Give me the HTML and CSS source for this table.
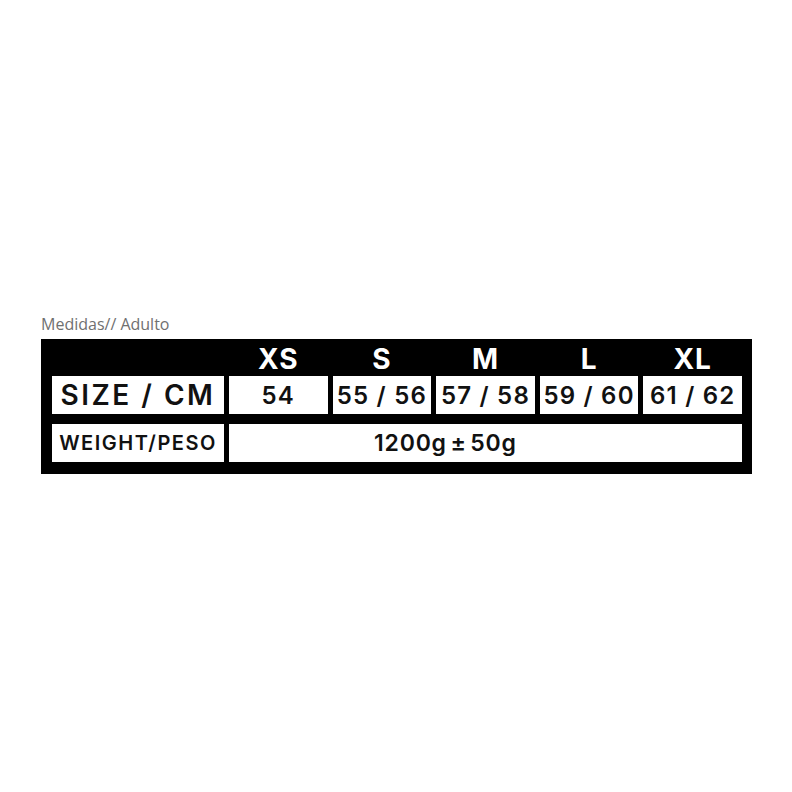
FILE: index.html
```html
<!DOCTYPE html>
<html lang="es">
<head>
<meta charset="utf-8">
<title>Medidas Adulto</title>
<link rel="stylesheet" href="styles.css">
</head>
<body>
<main class="page">
  <p class="caption">Medidas// Adulto</p>
  <div class="chart">
    <div class="head-blank"></div>
    <div class="head">XS</div>
    <div class="head">S</div>
    <div class="head">M</div>
    <div class="head">L</div>
    <div class="head">XL</div>

    <div class="cell label label-size">SIZE / CM</div>
    <div class="cell num">54</div>
    <div class="cell num">55 / 56</div>
    <div class="cell num">57 / 58</div>
    <div class="cell num">59 / 60</div>
    <div class="cell num">61 / 62</div>

    <div class="cell label label-weight">WEIGHT/PESO</div>
    <div class="cell weight">1200g ± 50g</div>
  </div>
</main>
</body>
</html>
```
FILE: styles.css
```css
html, body {
  margin: 0;
  padding: 0;
  background: #ffffff;
}

.page {
  padding: 314px 0 0 41px;
}

.caption {
  margin: 0 0 5px 0;
  font-family: "Open Sans", "Liberation Sans", sans-serif;
  font-size: 16px;
  line-height: 20px;
  color: #707070;
}

.chart {
  width: 690px;
  background: #000000;
  padding: 0 10px 12px 11px;
  display: grid;
  grid-template-columns: 172px repeat(5, 1fr);
  grid-template-rows: 37px 38px 48px;
  column-gap: 5px;
  font-family: Inter, "DejaVu Sans", sans-serif;
  font-weight: 600;
}

.head {
  color: #ffffff;
  font-size: 28px;
  font-weight: 700;
  line-height: 28px;
  display: flex;
  align-items: flex-end;
  justify-content: center;
  padding-bottom: 3px;
  letter-spacing: 1px;
}

.cell {
  background: #ffffff;
  color: #111111;
  display: flex;
  align-items: center;
  justify-content: center;
  white-space: nowrap;
}

.label-size {
  font-size: 28px;
  letter-spacing: 2.5px;
}

.num {
  font-size: 24px;
  letter-spacing: 1.2px;
}

.label-weight {
  font-size: 20px;
  letter-spacing: 1.5px;
}

.weight {
  grid-column: 2 / 7;
  font-size: 23px;
  justify-content: flex-start;
  padding-left: 145px;
  letter-spacing: 0.8px;
  word-spacing: -3px;
}

.label-weight, .weight {
  height: 38px;
  align-self: end;
}
```
